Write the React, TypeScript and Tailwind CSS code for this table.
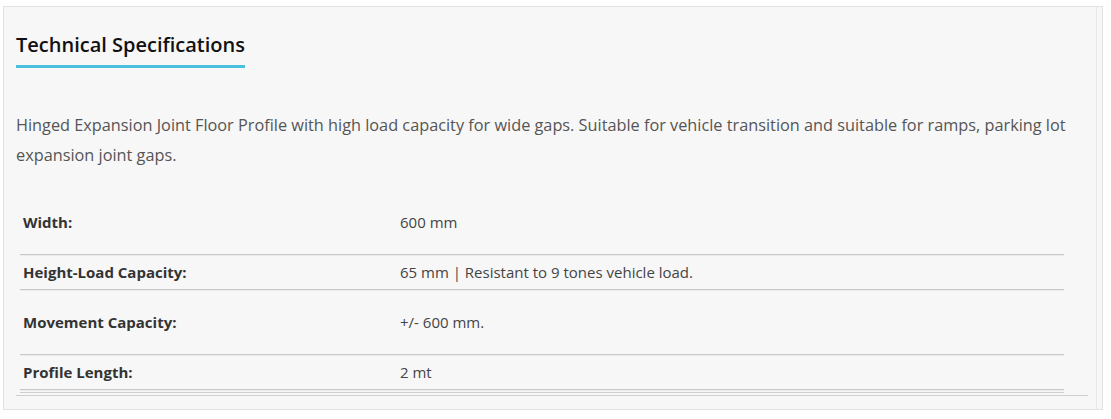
// Technical specifications panel

const specs = [
  { label: "Width:", value: "600 mm", tall: true },
  { label: "Height-Load Capacity:", value: "65 mm | Resistant to 9 tones vehicle load.", tall: false },
  { label: "Movement Capacity:", value: "+/- 600 mm.", tall: true },
  { label: "Profile Length:", value: "2 mt", tall: false },
];

export default function App() {
  return (
    <div
      className="w-[1111px] h-[419px] bg-white pt-[6px] pl-[3px]"
      style={{ fontFamily: '"Open Sans", "Liberation Sans", sans-serif' }}
    >
      <div className="w-[1100px] h-[404px] border border-[#e2e2e2] bg-[#f7f7f7] pl-[12px] pt-[24px] shadow-[inset_-5px_0_0_#f7f7f7,inset_-6px_0_0_#e9e9e9]">
        {/* heading */}
        <h2 className="inline-block border-b-[3px] border-[#4bc0de] pb-[6px] text-[20px] leading-[28px] font-semibold text-[#111]">
          Technical Specifications
        </h2>

        {/* description */}
        <p className="mt-[42px] w-[1075px] text-[16.3px] leading-[30px] text-[#555]">
          Hinged Expansion Joint Floor Profile with high load capacity for wide gaps. Suitable for vehicle transition and suitable for ramps, parking lot expansion joint gaps.
        </p>

        {/* spec table */}
        <div className="mt-[20px] w-[1072px] border-b border-[#cfcfcf]">
          <div className="ml-[4px] w-[1044px] border-b border-[#cfcfcf] pb-[2px]">
            {specs.map((row) => (
              <div
                key={row.label}
                className={
                  row.tall
                    ? "flex border-b border-[#c8c8c8] py-[22px] text-[15px] leading-[20px] shadow-[0_1px_0_#ebebeb]"
                    : "flex border-b border-[#c8c8c8] py-[7px] text-[15px] leading-[20px] shadow-[0_1px_0_#ebebeb]"
                }
              >
                <div className="w-[380px] pl-[3px] font-bold text-[#333]">{row.label}</div>
                <div className="text-[#444]">{row.value}</div>
              </div>
            ))}
          </div>
          <div className="h-[2px]" />
        </div>
      </div>
    </div>
  );
}
